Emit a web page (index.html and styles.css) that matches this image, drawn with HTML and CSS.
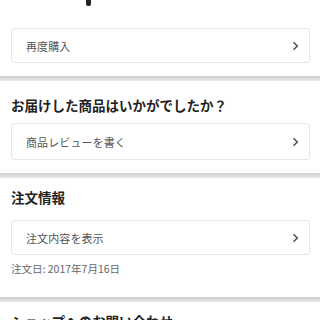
FILE: index.html
```html
<!DOCTYPE html>
<html lang="ja">
<head>
<meta charset="utf-8">
<link rel="stylesheet" href="styles.css">
</head>
<body>
<div class="page">
  <div class="top">
    <span class="mark"></span>
  </div>
  <section class="sec sec-first">
    <a class="card">
      <span class="label">再度購入</span>
      <svg class="chev" width="7" height="10" viewBox="0 0 7 10"><path d="M1.5 1.2 L5.3 5 L1.5 8.8" fill="none" stroke="#555" stroke-width="1.6"/></svg>
    </a>
  </section>
  <div class="sep"></div>
  <section class="sec sec-review">
    <h2 class="head">お届けした商品はいかがでしたか？</h2>
    <a class="card card-tall">
      <span class="label">商品レビューを書く</span>
      <svg class="chev" width="7" height="10" viewBox="0 0 7 10"><path d="M1.5 1.2 L5.3 5 L1.5 8.8" fill="none" stroke="#555" stroke-width="1.6"/></svg>
    </a>
  </section>
  <div class="sep"></div>
  <section class="sec sec-order">
    <h2 class="head head-order">注文情報</h2>
    <a class="card">
      <span class="label">注文内容を表示</span>
      <svg class="chev" width="7" height="10" viewBox="0 0 7 10"><path d="M1.5 1.2 L5.3 5 L1.5 8.8" fill="none" stroke="#555" stroke-width="1.6"/></svg>
    </a>
    <p class="date">注文日: 2017年7月16日</p>
  </section>
  <div class="sep"></div>
  <section class="sec sec-last">
    <h2 class="head">ショップへのお問い合わせ</h2>
  </section>
</div>
</body>
</html>
```
FILE: styles.css
```css
html, body {
  margin: 0;
  padding: 0;
  background: #fff;
}
body {
  font-family: "Noto Sans CJK JP", "Noto Sans", sans-serif;
  color: #222;
  width: 320px;
  height: 320px;
  overflow: hidden;
}
.top {
  height: 6px;
  position: relative;
}
.mark {
  position: absolute;
  left: 86px;
  top: 0;
  width: 5px;
  height: 6px;
  background: #222;
  border-radius: 0 0 2px 2px;
}
.sec {
  padding: 16px 10px 12px 11px;
}
.sec-first {
  padding-top: 22px;
  padding-bottom: 13px;
}
.sec-review {
  padding-bottom: 13px;
}
.sec-order {
  padding-top: 11px;
  padding-bottom: 21px;
}
.sec-last {
  padding-top: 11px;
}
.head {
  margin: 0 0 10px 0;
  font-size: 13.5px;
  line-height: 16px;
  font-weight: 700;
  color: #222;
}
.head-order {
  margin-bottom: 15px;
}
.card {
  display: flex;
  align-items: center;
  justify-content: space-between;
  height: 35px;
  box-sizing: border-box;
  border: 1px solid #e6e6e6;
  border-radius: 3px;
  padding: 0 10px 0 14px;
  background: #fff;
}
.card-tall {
  height: 37px;
}
.label {
  font-size: 11px;
  color: #555;
  letter-spacing: 0.1px;
}
.chev {
  display: block;
}
.date {
  margin: 7px 0 0 0;
  font-size: 10.5px;
  line-height: 14px;
  color: #666;
}
.sep {
  height: 5px;
  background: linear-gradient(#cfcfcf, #dedede 60%, #e8e8e8);
}
```
